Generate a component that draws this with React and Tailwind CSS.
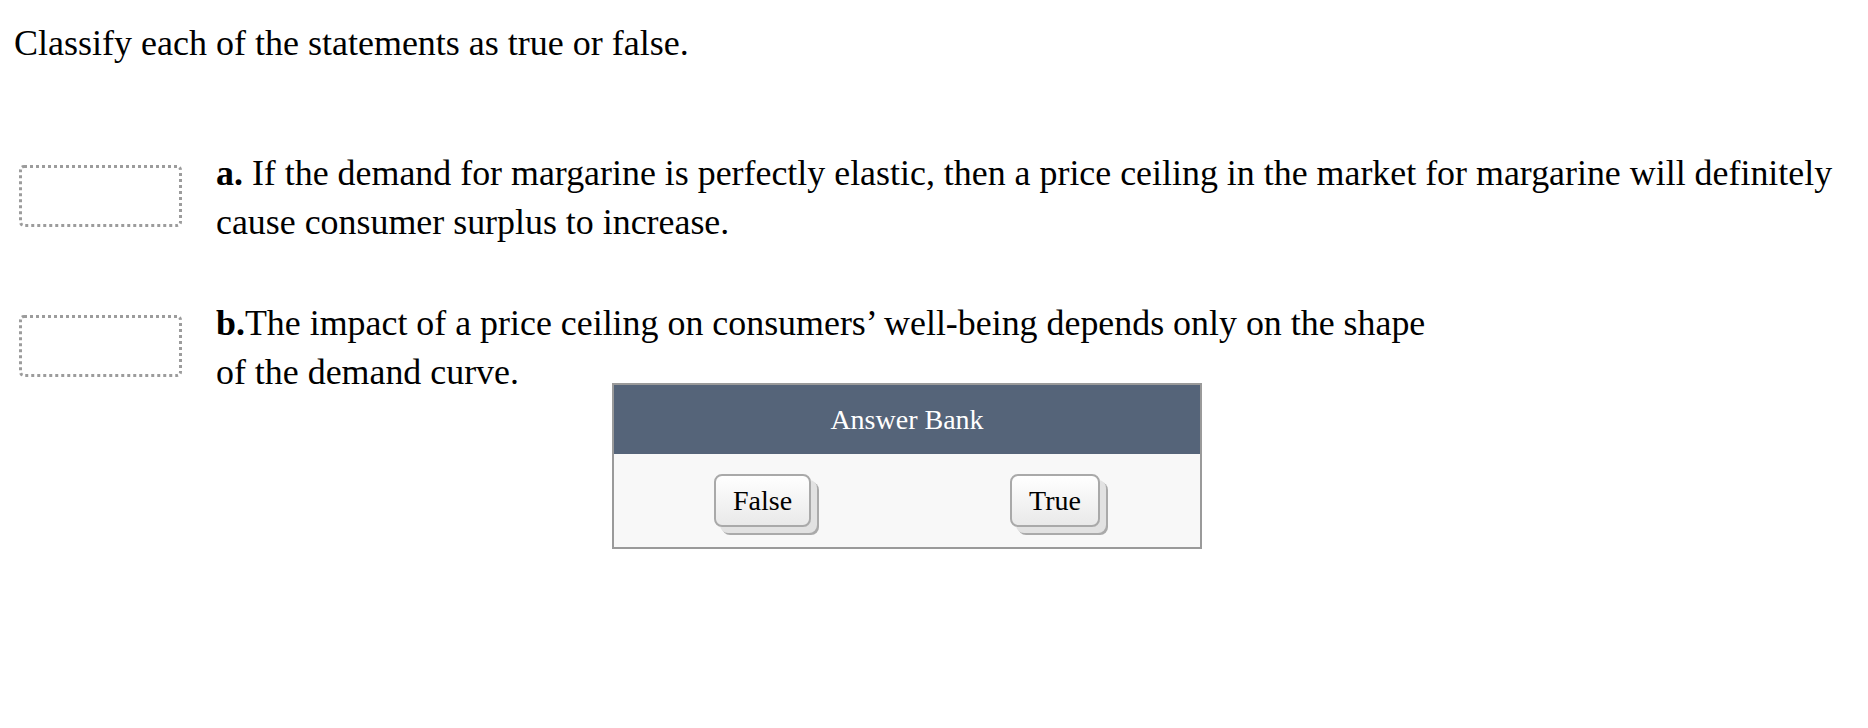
import React from "react";

function DropBox() {
  return (
    <div className="mt-[16px] h-[62px] w-[163px] shrink-0 rounded-[5px] border-[3px] border-dotted border-[#9c9c9c] bg-white" />
  );
}

function Chip({ label }) {
  return (
    <div className="flex h-[53px] items-center rounded-[8px] border-2 border-[#a9a9a9] bg-gradient-to-b from-white to-[#e9e9e9] px-[17px] text-[28px] leading-[31px] text-black shadow-[6px_6px_0_0_#e2e2e2,8px_8px_0_0_#aaaaaa]">
      {label}
    </div>
  );
}

export default function App() {
  return (
    <div
      className="min-h-[728px] w-[1868px] bg-white text-black"
      style={{ fontFamily: '"Liberation Serif", "Times New Roman", serif' }}
    >
      <div className="pl-[14px] pt-[19px] text-[36px] leading-[49px]">
        Classify each of the statements as true or false.
      </div>

      <div className="mt-[81px] flex gap-[34px] pl-[19px]">
        <DropBox />
        <div className="text-[35.9px] leading-[49px]">
          <span className="font-bold">a.</span> If the demand for margarine is
          perfectly elastic, then a price ceiling in the market for margarine
          will definitely
          <br />
          cause consumer surplus to increase.
        </div>
      </div>

      <div className="mt-[52px] flex gap-[34px] pl-[19px]">
        <DropBox />
        <div className="text-[35.9px] leading-[49px]">
          <span className="font-bold">b.</span>The impact of a price ceiling on
          consumers’ well-being depends only on the shape
          <br />
          of the demand curve.
        </div>
      </div>

      <div className="-mt-[14px] ml-[612px] w-[590px] border-2 border-[#9a9a9a]">
        <div className="flex h-[69px] items-center justify-center bg-[#556479] text-[28px] leading-[31px] text-white">
          Answer Bank
        </div>
        <div className="flex h-[93px] items-start gap-[199px] bg-[#f8f8f8] pl-[100px] pt-[20px]">
          <Chip label="False" />
          <Chip label="True" />
        </div>
      </div>
    </div>
  );
}
